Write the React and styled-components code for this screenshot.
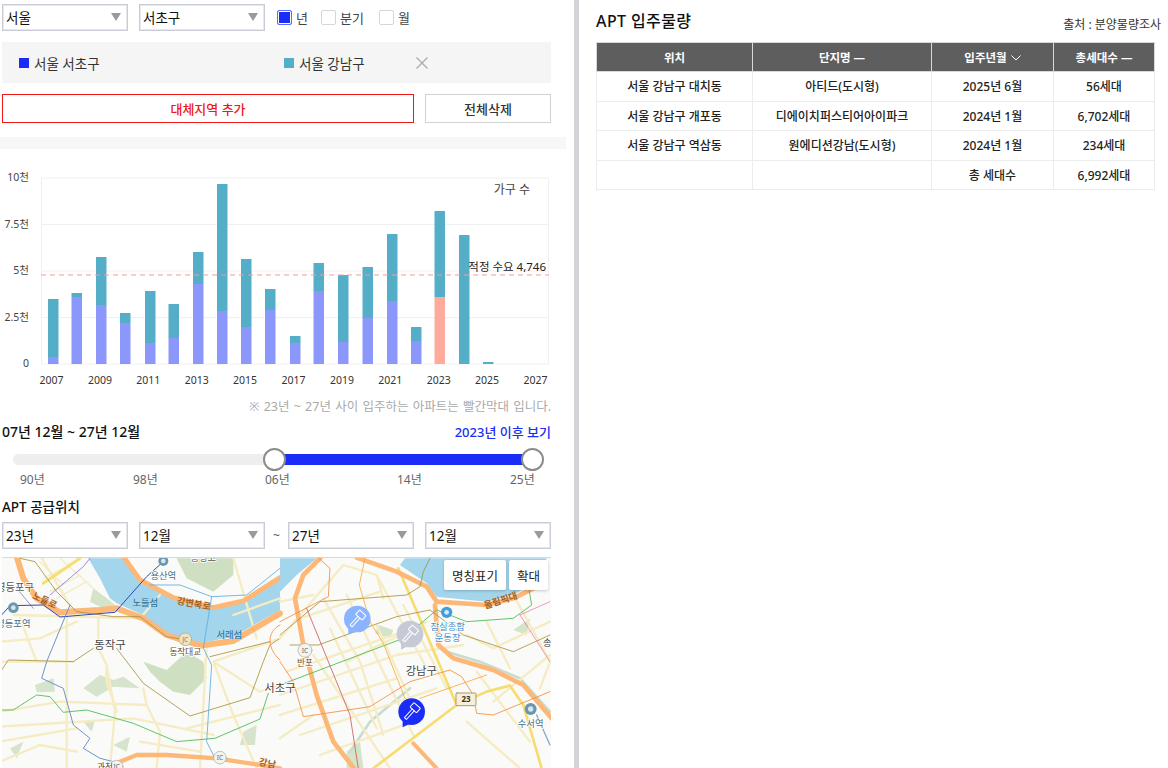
import React from 'react';
import styled, { createGlobalStyle } from 'styled-components';

const GlobalStyle = createGlobalStyle`
  html, body {
    margin: 0;
    padding: 0;
    background: #fff;
    font-family: "Noto Sans", "Noto Sans CJK KR", sans-serif;
    color: #222;
  }
  * { box-sizing: border-box; }
`;

const Page = styled.div`
  display: flex;
  width: 1168px;
  height: 768px;
  overflow: hidden;
`;

const LeftPane = styled.div`
  width: 574px;
  flex: none;
  padding-top: 4px;
`;

const Divider = styled.div`
  width: 5px;
  flex: none;
  background: #d4d4d8;
`;

const RightPane = styled.div`
  flex: 1;
  padding: 10px 14px 0 17px;
`;

const Row = styled.div`
  display: flex;
  align-items: center;
  gap: ${props => props.gap || 11}px;
  width: 549px;
  margin-left: 2px;
`;

const SelectWrap = styled.div`
  position: relative;
  width: 126px;
  height: 27px;
  flex: none;
  &::after {
    content: '';
    position: absolute;
    right: 7px;
    top: 9px;
    border-left: 5px solid transparent;
    border-right: 5px solid transparent;
    border-top: 8px solid #9a9a9a;
    pointer-events: none;
  }
`;

const NativeSelect = styled.select`
  appearance: none;
  width: 100%;
  height: 100%;
  padding: 0 0 0 3px;
  background: #fff;
  border: 1px solid #c9ccd6;
  box-shadow: inset 0 0 0 1px #e6e8ee;
  border-radius: 0;
  font: 400 13.5px "Noto Sans", "Noto Sans CJK KR", sans-serif;
  color: #111;
  outline: none;
`;

const CheckGroup = styled.label`
  display: flex;
  align-items: center;
  gap: 4px;
  font-size: 13px;
  color: #444;
  margin-right: ${props => props.gap}px;
`;

const CheckBox = styled.span`
  width: 15px;
  height: 15px;
  flex: none;
  border: 1px solid ${props => (props.checked ? '#5a6cff' : '#d4d6dc')};
  border-radius: 2px;
  background: ${props => (props.checked ? '#1a2cf5' : '#fff')};
  box-shadow: ${props => (props.checked ? 'inset 0 0 0 1px #fff' : 'none')};
`;

const ChecksRow = styled.div`
  display: flex;
  align-items: center;
  margin-left: 1px;
`;

const CompareBox = styled.div`
  display: flex;
  align-items: center;
  width: 549px;
  height: 41px;
  margin: 11px 0 0 2px;
  padding-left: 17px;
  background: #f5f5f5;
  font-size: 13.5px;
  color: #333;
`;

const CompareItem = styled.div`
  display: flex;
  align-items: center;
  gap: 5px;
  width: ${props => props.width}px;
`;

const Swatch = styled.span`
  width: 10px;
  height: 10px;
  background: ${props => props.color};
`;

const CloseMark = styled.svg`
  width: 12px;
  height: 12px;
`;

const ButtonRow = styled(Row)`
  margin-top: 11px;
`;

const OutlineButton = styled.button`
  height: 29px;
  width: ${props => props.width}px;
  flex: none;
  background: #fff;
  border: 1px solid ${props => (props.danger ? '#f01818' : '#d2d2d2')};
  color: ${props => (props.danger ? '#f01818' : '#333')};
  font: 500 13px "Noto Sans", "Noto Sans CJK KR", sans-serif;
  padding: 0;
`;

const Band = styled.div`
  width: 566px;
  height: 12px;
  margin-top: 14px;
  background: #f7f7f7;
`;

const ChartSvg = styled.svg`
  display: block;
  width: 566px;
  height: 245px;
  margin-top: 1px;
  font-family: "Noto Sans", "Noto Sans CJK KR", sans-serif;
`;

const Note = styled.div`
  width: 551px;
  margin-top: 4px;
  text-align: right;
  font-size: 12.5px;
  word-spacing: 1px;
  line-height: 16px;
  color: #aaa;
`;

const RangeHead = styled.div`
  display: flex;
  justify-content: space-between;
  align-items: center;
  width: 549px;
  margin: 8px 0 0 2px;
  line-height: 18px;
`;

const RangeTitle = styled.div`
  font-size: 14px;
  font-weight: 500;
  color: #111;
`;

const RangeLink = styled.a`
  font-size: 13px;
  font-weight: 500;
  color: #1a2cf5;
`;

const SliderTrack = styled.div`
  position: relative;
  width: 519px;
  height: 11px;
  margin: 13px 0 0 13px;
  border-radius: 6px;
  background: #eeeeee;
`;

const SliderFill = styled.div`
  position: absolute;
  top: 0;
  bottom: 0;
  background: #1a2cf5;
`;

const SliderThumb = styled.div`
  position: absolute;
  top: -6px;
  width: 23px;
  height: 23px;
  margin-left: -11px;
  border-radius: 50%;
  background: #fff;
  border: 2px solid #8c8c8c;
`;

const SliderLabels = styled.div`
  display: grid;
  grid-template-columns: 113px 132px 132px 113px auto;
  margin: 7px 0 0 20px;
  width: 530px;
  font-size: 12px;
  line-height: 16px;
  color: #666;
`;

const SectionTitle = styled.div`
  margin: 10px 0 0 2px;
  font-size: 13.5px;
  font-weight: 500;
  line-height: 18px;
  color: #111;
`;

const Tilde = styled.span`
  width: 12px;
  margin: 0 -5px 0 -5px;
  text-align: center;
  font-size: 12px;
  color: #555;
`;

const RangeRow = styled(Row)`
  margin-top: 6px;
`;

const MapFrame = styled.div`
  position: relative;
  width: 549px;
  height: 211px;
  margin: 8px 0 0 2px;
  overflow: hidden;
  background: #fafaf8;
  border-top: 1px solid #d8d8d8;
`;

const MapSvg = styled.svg`
  display: block;
  width: 549px;
  height: 211px;
  font-family: "Noto Sans", "Noto Sans CJK KR", sans-serif;
`;

const MapControls = styled.div`
  position: absolute;
  top: 2px;
  right: 3px;
  display: flex;
  gap: 3px;
`;

const MapButton = styled.button`
  height: 30px;
  padding: 0 8px;
  border: 0;
  border-radius: 2px;
  background: #fff;
  box-shadow: 0 1px 3px rgba(0, 0, 0, 0.2);
  font: 400 12.5px "Noto Sans", "Noto Sans CJK KR", sans-serif;
  color: #222;
`;

const HeadLine = styled.div`
  display: flex;
  justify-content: space-between;
  align-items: flex-end;
  margin-right: -6px;
  height: 32px;
`;

const PageTitle = styled.h2`
  margin: 0 0 10px;
  font-size: 16px;
  font-weight: 500;
  letter-spacing: 0.4px;
  line-height: 22px;
  color: #111;
`;

const Source = styled.div`
  font-size: 12px;
  line-height: 16px;
  margin-bottom: 9px;
  color: #333;
`;

const SupplyTable = styled.table`
  width: 558px;
  border-collapse: collapse;
  table-layout: fixed;
  font-size: 12px;
  color: #222;
  text-align: center;
`;

const HeadCell = styled.th`
  width: ${props => props.width}px;
  height: 29px;
  padding: 0;
  background: #5e5e5e;
  border: 1px solid #d8d8d8;
  color: #fff;
  font-size: 11.5px;
  font-weight: 700;
`;

const SortChevron = styled.svg`
  width: 10px;
  height: 6px;
  margin-left: 4px;
  vertical-align: 1px;
`;

const Cell = styled.td`
  height: 29.5px;
  padding: 0;
  border: 1px solid #ececec;
  font-weight: 500;
`;

const bars = [
  { x: 48, top: 299, mid: 357 },
  { x: 71.5, top: 293, mid: 297 },
  { x: 96, top: 257, mid: 305 },
  { x: 120, top: 313, mid: 323 },
  { x: 145, top: 291, mid: 343 },
  { x: 168.5, top: 304, mid: 338 },
  { x: 193, top: 252, mid: 284 },
  { x: 217, top: 184, mid: 311 },
  { x: 241, top: 259, mid: 327 },
  { x: 265, top: 289, mid: 310 },
  { x: 290, top: 336, mid: 343 },
  { x: 313.5, top: 263, mid: 291 },
  { x: 338, top: 275, mid: 342 },
  { x: 362.5, top: 267, mid: 318 },
  { x: 387, top: 234, mid: 301 },
  { x: 411, top: 327, mid: 341 },
  { x: 434.5, top: 211, mid: 297, future: true },
  { x: 459, top: 235, mid: 364 },
  { x: 483, top: 362, mid: 364 },
];

const yTicks = [
  { label: '10천', y: 178 },
  { label: '7.5천', y: 224.5 },
  { label: '5천', y: 271 },
  { label: '2.5천', y: 317.5 },
  { label: '0', y: 364 },
];

const xTicks = [2007, 2009, 2011, 2013, 2015, 2017, 2019, 2021, 2023, 2025, 2027];

// chart is drawn in page coordinates, the svg starts at y=150
const SupplyChart = () => (
  <ChartSvg viewBox="0 150 566 245">
    {yTicks.map(t => (
      <g key={t.label}>
        <line x1="41" x2="549" y1={t.y} y2={t.y} stroke="#f0f0f0" />
        <text x="29" y={t.y + 3} textAnchor="end" fontSize="10.5" fill="#444">{t.label}</text>
      </g>
    ))}
    <line x1="41.5" x2="41.5" y1="178" y2="364" stroke="#f0f0f0" />
    <line x1="548.5" x2="548.5" y1="178" y2="364" stroke="#f0f0f0" />
    {bars.map(b => (
      <g key={b.x}>
        <rect x={b.x} y={b.top} width="10.5" height={b.mid - b.top} fill="#55aec7" />
        <rect x={b.x} y={b.mid} width="10.5" height={364 - b.mid} fill={b.future ? '#ffab9b' : '#8c97fb'} />
      </g>
    ))}
    <line x1="41" x2="549" y1="275" y2="275" stroke="#f79a9a" strokeDasharray="5 4" />
    <text x="546" y="271" textAnchor="end" fontSize="11.5" fill="#222">적정 수요 4,746</text>
    <text x="530" y="194" textAnchor="end" fontSize="12" fill="#444">가구 수</text>
    {xTicks.map((year, i) => (
      <text key={year} x={51.5 + i * 48.4} y="384" textAnchor="middle" fontSize="10.5" fill="#333">{year}</text>
    ))}
  </ChartSvg>
);

const Marker = ({ x, y, fill, stroke = '#fff' }) => (
  <g transform={`translate(${x} ${y})`}>
    <path d="M-27 28 L-27 47 L-7 37 Z" fill={fill} />
    <circle r="40" fill={fill} />
    <g transform="rotate(42)" fill="none" stroke={stroke} strokeWidth="3" strokeLinejoin="round">
      <rect x="-13" y="-25" width="26" height="18" rx="2" />
      <path d="M-4 -7 L-4 28 L4 28 L4 -7" />
    </g>
  </g>
);

const MapLabel = ({ x, y, size = 27, fill = '#444', children, halo = '#fff' }) => (
  <text x={x} y={y} fontSize={size} fill={fill} stroke={halo} strokeWidth="5" paintOrder="stroke" textAnchor="middle">
    {children}
  </text>
);

const RoadLabel = ({ x, y, angle, children }) => (
  <text x={x} y={y} fontSize="28" fontWeight="700" fill="#a8621c" transform={`rotate(${angle} ${x} ${y})`} textAnchor="middle">
    {children}
  </text>
);

// left and right sheets use the 3x coordinates the map was read at
const SeoulMap = () => (
  <MapSvg viewBox="2 558 549 211">
    <rect x="2" y="558" width="549" height="211" fill="#fafaf8" />
    <g transform="translate(0 555) scale(0.3333)" fill="none" strokeLinecap="round" strokeLinejoin="round">
      <path fill="#cfe0c2" d="M530 10 L700 10 L700 60 L640 110 L560 70 Z" />
      <path fill="#cfe0c2" d="M430 320 L500 345 L560 290 L610 320 L620 370 L570 420 L520 410 L480 380 L450 350 Z" />
      <path fill="#d6e4cd" d="M250 400 L300 360 L340 375 L370 365 L420 400 L340 395 L290 425 Z" />
      <path fill="#d6e4cd" d="M105 390 L160 370 L165 410 L110 412 Z" />
      <path fill="#d6e4cd" d="M250 500 L285 495 L275 530 Z" />
      <path fill="#d6e4cd" d="M730 530 L770 510 L765 570 L720 570 Z" />
      <path fill="#d6e4cd" d="M30 580 L70 560 L50 610 Z" />
      <path fill="#d6e4cd" d="M340 570 L390 545 L380 590 Z" />
      <path fill="#a3d5ec" d="M265 10 L300 70 L330 130 L350 145 L430 180 L500 235 L600 265 L700 245 L840 165 L840 70 L730 135 L640 155 L520 130 L420 80 L370 10 Z" />
      <path fill="#d4e4c8" d="M280 100 L320 130 L345 150 L310 160 L270 140 Z" />
      <g stroke="#f5ecc4" strokeWidth="7">
        <path d="M0 320 L220 320 M0 470 L180 440 L440 450 M0 515 L400 490 L640 540 M0 560 L230 520 M120 0 L220 170 M295 190 L295 280 L320 330 L345 470 L330 640" />
        <path d="M200 190 L200 640 M40 180 L430 190 M320 340 C310 390 340 420 350 470 M430 400 L440 450 L480 530 L470 640" />
        <path d="M640 320 L840 250 M640 320 L700 480 L770 640 M640 320 L780 410 L840 390 M620 270 L600 640 M700 10 L770 250 M560 520 L840 450 M480 120 L420 190" />
        <path d="M0 260 L120 250 L230 200 M60 190 L110 320 M0 620 L120 570 L230 590 M420 560 L600 590 M700 180 L840 130" />
        <path d="M130 70 L210 30 M150 110 L240 60 M170 130 L260 80 M120 20 L190 90 M180 10 L280 100" strokeWidth="4" />
      </g>
      <path stroke="#fdb777" strokeWidth="18" d="M50 5 L70 70 L110 130 L180 172 L300 165 L350 160 L430 190 L500 240 L600 272 L700 258 L840 175" />
      <path stroke="#fdb777" strokeWidth="15" d="M370 5 L420 75 L520 128 L640 158 L730 138 L840 68" />
      <path stroke="#fdb777" strokeWidth="13" d="M360 620 L410 600 L500 600 L650 610 L780 630 L840 640" />
      <path stroke="#f8dd72" strokeWidth="9" d="M130 85 L240 10" />
      <path stroke="#a8923a" strokeWidth="2.5" d="M60 10 L105 20 L170 110 L230 170 L340 185 L420 185 L500 245 L560 255" />
      <path stroke="#a8923a" strokeWidth="2.5" d="M5 345 L25 315 L220 320 L280 280 M350 280 L430 385 L570 483 L750 428 L790 320 L810 270 L840 250 M630 305 L810 260" />
      <path stroke="#7a56c8" strokeWidth="2" d="M50 100 L100 160 M150 120 L250 35 L270 10" />
      <path stroke="#2a48b8" strokeWidth="3" d="M5 180 L30 152 L130 150 L180 186 L345 172 L440 65 L490 20" />
      <path stroke="#6f94c8" strokeWidth="3" d="M210 150 L140 320 L125 370 L190 400 L220 510 L270 550 L250 580 L300 610 L340 620" />
      <path stroke="#5aaee0" strokeWidth="2.5" d="M450 90 L540 90 L635 125 L610 280 L635 330 L620 560 L650 620" />
      <path stroke="#5aaee0" strokeWidth="2.5" d="M635 125 L740 120 L840 40" />
      <path stroke="#45b94a" strokeWidth="2.5" d="M5 465 L40 465 L110 420 L150 425 L190 472 L260 465 L400 505 L530 560 L645 550 L780 492 L805 415" />
      <path stroke="#f58b3a" strokeWidth="2.5" d="M840 210 C800 230 800 280 840 315" />
      <circle cx="40" cy="158" r="16" fill="#6a97ae" />
      <circle cx="490" cy="18" r="15" fill="#6a97ae" />
      <circle cx="40" cy="158" r="7" fill="#d8e6ee" />
      <circle cx="490" cy="18" r="7" fill="#d8e6ee" />
      <circle cx="556" cy="253" r="19" fill="#eee4c8" stroke="#b0a070" strokeWidth="2" />
      <text x="556" y="261" fontSize="20" fill="#8a7a50" textAnchor="middle">JC</text>
      <circle cx="660" cy="608" r="19" fill="#f3f3f0" stroke="#a8a8a0" strokeWidth="2" />
      <text x="660" y="616" fontSize="20" fill="#666" textAnchor="middle">IC</text>
      <circle cx="350" cy="635" r="19" fill="#f3f3f0" stroke="#a8a8a0" strokeWidth="2" />
      <text x="350" y="643" fontSize="20" fill="#666" textAnchor="middle">IC</text>
      <MapLabel x="490" y="72" size="28" fill="#3f6f88">용산역</MapLabel>
      <MapLabel x="610" y="18" size="28" fill="#555">동빙고</MapLabel>
      <MapLabel x="45" y="107" size="31" fill="#555">영등포구</MapLabel>
      <MapLabel x="40" y="215" size="28" fill="#3f6f88">영등포역</MapLabel>
      <MapLabel x="436" y="154" size="28" fill="#2f6d8e" halo="#a3d5ec">노들섬</MapLabel>
      <MapLabel x="688" y="248" size="28" fill="#2f6d8e" halo="#a3d5ec">서래섬</MapLabel>
      <MapLabel x="330" y="283" size="34">동작구</MapLabel>
      <MapLabel x="556" y="300" size="26" fill="#6a4a30">동작대교</MapLabel>
      <RoadLabel x={580} y={156} angle={10}>강변북로</RoadLabel>
      <RoadLabel x={130} y={145} angle={25}>노들로</RoadLabel>
      <RoadLabel x={800} y={635} angle={12}>강남</RoadLabel>
      <MapLabel x="315" y="645" size="26">과천</MapLabel>
    </g>
    <g transform="translate(280 555) scale(0.3333)" fill="none" strokeLinecap="round" strokeLinejoin="round">
      <path fill="#a3d5ec" d="M0 10 L110 10 L50 60 L0 110 Z" />
      <path fill="#a3d5ec" d="M375 10 L800 10 L760 85 L700 120 L620 140 L470 125 L440 85 L360 30 Z" />
      <path fill="#d4e4c8" d="M295 210 L340 225 L330 250 L285 235 Z" />
      <path fill="#d4e4c8" d="M200 590 L240 560 L250 640 L200 640 Z" />
      <path fill="#d4e4c8" d="M700 225 L750 190 L740 240 Z" />
      <path stroke="#c8dcd0" strokeWidth="8" d="M210 590 L270 500 L390 400 M500 290 L600 320 L720 370 L810 470" />
      <g stroke="#f5ecc4" strokeWidth="7">
        <path d="M0 250 L190 30 L290 60 L310 130 M60 190 L300 110 M0 420 L350 300 L550 270 M0 480 L350 370 M100 300 L330 640 M200 120 L400 540 M290 60 L440 340 M130 130 L240 320 L310 540 M0 550 L100 480 M200 320 L440 200 M560 240 L640 280 L810 200 M620 200 L690 340 M590 350 L750 560 M640 440 L810 300 M700 120 L810 320 L780 400" />
        <path d="M20 350 L400 220 M60 540 L470 400 M120 600 L400 500 M150 220 L290 520 M290 210 L420 500 M370 150 L500 400 M560 500 L720 640 M0 140 L100 120" />
      </g>
      <path stroke="#f7dc70" strokeWidth="8" d="M355 40 L530 450" />
      <path stroke="#f7dc70" strokeWidth="8" d="M530 450 L280 640" />
      <path stroke="#f7dc70" strokeWidth="8" d="M530 450 L620 410 L690 392 L730 450 L785 640" />
      <path stroke="#fdb777" strokeWidth="14" d="M122 8 L70 60 L45 130 L70 270 L110 420 L160 560 L222 640" />
      <path stroke="#fdb777" strokeWidth="14" d="M230 8 L350 50 L440 95 L470 140 L620 150 L700 130 L760 100" />
      <path stroke="#fdb777" strokeWidth="14" d="M465 150 L475 270 L520 310 L640 345 L730 390 L815 490" />
      <path stroke="#fdb777" strokeWidth="12" d="M400 565 L470 640" />
      <path stroke="#a8923a" strokeWidth="2.5" d="M0 240 L120 140 L380 120 L420 95 L430 50 L450 10" />
      <path stroke="#a8923a" strokeWidth="2.5" d="M30 270 L115 270 L350 185 L450 165 L550 240 L700 290 L810 240" />
      <path stroke="#45b94a" strokeWidth="2.5" d="M0 390 L370 250 L470 165 L560 200 L700 190 L755 150 L745 90" />
      <path stroke="#f9a83c" strokeWidth="2.5" d="M255 10 L238 90 L270 200 L310 265 L375 430 M420 430 L620 360" />
      <path stroke="#f58b3a" strokeWidth="2.5" d="M0 200 L145 125 L150 40 L115 8 M0 320 L40 380 L70 485 L270 455 L390 380 L510 345 L545 365 L580 420 L590 475 L640 480 L810 410" />
      <path stroke="#cc5a5a" strokeWidth="2.5" d="M80 160 L210 480 L235 640" />
      <path stroke="#e968a8" strokeWidth="2" d="M720 180 L810 320 M720 180 L810 140" />
      <path stroke="#8fa8c8" strokeWidth="4" d="M770 480 L810 570" />
      <circle cx="75" cy="286" r="21" fill="#f3f3f0" stroke="#a8a8a0" strokeWidth="2" />
      <circle cx="500" cy="172" r="17" fill="#3f9fdc" />
      <circle cx="500" cy="172" r="7" fill="#d8eaf6" />
      <circle cx="752" cy="462" r="18" fill="#6a97ae" />
      <circle cx="752" cy="462" r="8" fill="#d8e6ee" />
      <rect x="528" y="414" width="60" height="38" rx="3" fill="#f8efd8" stroke="#a08850" strokeWidth="2.5" />
      <text x="558" y="442" fontSize="24" fontWeight="700" fill="#333" textAnchor="middle">23</text>
      <text x="75" y="294" fontSize="20" fill="#666" textAnchor="middle">IC</text>
      <MapLabel x="0" y="412" size="34">서초구</MapLabel>
      <MapLabel x="75" y="332" size="26" fill="#6a4a30">반포</MapLabel>
      <MapLabel x="503" y="226" size="28" fill="#3f8fc8">잠실종합</MapLabel>
      <MapLabel x="503" y="258" size="28" fill="#3f8fc8">운동장</MapLabel>
      <MapLabel x="424" y="361" size="34">강남구</MapLabel>
      <MapLabel x="752" y="515" size="28" fill="#3f6f88">수서역</MapLabel>
      <MapLabel x="802" y="272" size="28">송</MapLabel>
      <RoadLabel x={665} y={146} angle={-18}>올림픽대</RoadLabel>
      <Marker x={232} y={192} fill="#8ab4ff" />
      <Marker x={390} y={237} fill="#c6cad6" />
      <Marker x={395} y={470} fill="#1a2cf5" />
    </g>
  </MapSvg>
);

const rows = [
  ['서울 강남구 대치동', '아티드(도시형)', '2025년 6월', '56세대'],
  ['서울 강남구 개포동', '디에이치퍼스티어아이파크', '2024년 1월', '6,702세대'],
  ['서울 강남구 역삼동', '원에디션강남(도시형)', '2024년 1월', '234세대'],
  ['', '', '총 세대수', '6,992세대'],
];

const App = () => (
  <Page>
    <GlobalStyle />
    <LeftPane>
      <Row>
        <SelectWrap><NativeSelect defaultValue="서울"><option>서울</option></NativeSelect></SelectWrap>
        <SelectWrap><NativeSelect defaultValue="서초구"><option>서초구</option></NativeSelect></SelectWrap>
        <ChecksRow>
          <CheckGroup gap={13}><CheckBox checked />년</CheckGroup>
          <CheckGroup gap={15}><CheckBox />분기</CheckGroup>
          <CheckGroup gap={0}><CheckBox />월</CheckGroup>
        </ChecksRow>
      </Row>
      <CompareBox>
        <CompareItem width={265}><Swatch color="#1a2cf5" />서울 서초구</CompareItem>
        <CompareItem width={132}><Swatch color="#55aec7" />서울 강남구</CompareItem>
        <CloseMark viewBox="0 0 12 12">
          <path d="M0.5 0.5 L11.5 11.5 M11.5 0.5 L0.5 11.5" stroke="#aaa" strokeWidth="1.2" />
        </CloseMark>
      </CompareBox>
      <ButtonRow>
        <OutlineButton danger width={412}>대체지역 추가</OutlineButton>
        <OutlineButton width={126}>전체삭제</OutlineButton>
      </ButtonRow>
      <Band />
      <SupplyChart />
      <Note>※ 23년 ~ 27년 사이 입주하는 아파트는 빨간막대 입니다.</Note>
      <RangeHead>
        <RangeTitle>07년 12월 ~ 27년 12월</RangeTitle>
        <RangeLink>2023년 이후 보기</RangeLink>
      </RangeHead>
      <SliderTrack>
        <SliderFill style={{ left: 261, right: 0 }} />
        <SliderThumb style={{ left: 261 }} />
        <SliderThumb style={{ left: 519 }} />
      </SliderTrack>
      <SliderLabels>
        <span>90년</span><span>98년</span><span>06년</span><span>14년</span><span>25년</span>
      </SliderLabels>
      <SectionTitle>APT 공급위치</SectionTitle>
      <RangeRow>
        <SelectWrap><NativeSelect defaultValue="23년"><option>23년</option></NativeSelect></SelectWrap>
        <SelectWrap><NativeSelect defaultValue="12월"><option>12월</option></NativeSelect></SelectWrap>
        <Tilde>~</Tilde>
        <SelectWrap><NativeSelect defaultValue="27년"><option>27년</option></NativeSelect></SelectWrap>
        <SelectWrap><NativeSelect defaultValue="12월"><option>12월</option></NativeSelect></SelectWrap>
      </RangeRow>
      <MapFrame>
        <SeoulMap />
        <MapControls>
          <MapButton>명칭표기</MapButton>
          <MapButton>확대</MapButton>
        </MapControls>
      </MapFrame>
    </LeftPane>
    <Divider />
    <RightPane>
      <HeadLine>
        <PageTitle>APT 입주물량</PageTitle>
        <Source>출처 : 분양물량조사</Source>
      </HeadLine>
      <SupplyTable>
        <thead>
          <tr>
            <HeadCell width={156}>위치</HeadCell>
            <HeadCell width={179}>단지명 ―</HeadCell>
            <HeadCell width={122}>
              입주년월
              <SortChevron viewBox="0 0 10 6">
                <path d="M0.5 0.5 L5 5 L9.5 0.5" fill="none" stroke="#fff" strokeWidth="1" />
              </SortChevron>
            </HeadCell>
            <HeadCell width={101}>총세대수 ―</HeadCell>
          </tr>
        </thead>
        <tbody>
          {rows.map((row, i) => (
            <tr key={i}>
              {row.map((value, j) => <Cell key={j}>{value}</Cell>)}
            </tr>
          ))}
        </tbody>
      </SupplyTable>
    </RightPane>
  </Page>
);

export default App;
